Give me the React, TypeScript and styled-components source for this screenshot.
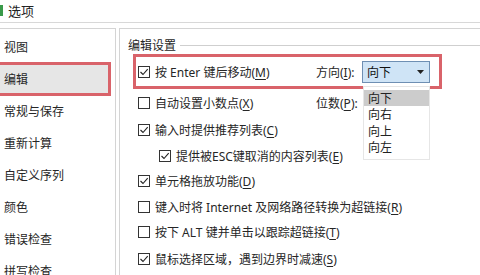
import React from "react";
import styled, { createGlobalStyle } from "styled-components";

const GlobalStyle = createGlobalStyle`
  html, body { margin: 0; padding: 0; background: #ffffff; }
  body {
    width: 480px; height: 275px; overflow: hidden;
    font-family: "Noto Sans", "Noto Sans CJK SC", sans-serif;
    font-size: 12px; color: #262626;
  }
  * { box-sizing: border-box; }
`;

const RED = "#d9636a";

const Window = styled.div`
  width: 480px; height: 275px; display: flex; flex-direction: column; background: #fff; overflow: hidden;
`;

const TitleBar = styled.div`
  height: 23px; display: flex; align-items: center; border-bottom: 1px solid #d8d8d8; flex: none;
`;

const AppMark = styled.div`
  width: 3px; height: 11px; background: #3a9a4a; margin-top: -1px;
`;

const Title = styled.span`
  margin-left: 5px; font-size: 13px; color: #222; margin-top: -2px;
`;

const Body = styled.div`
  flex: 1; display: flex; gap: 3px; padding-top: 5px; min-height: 0;
`;

const Sidebar = styled.div`
  width: 116px; flex: none; border-top: 1px solid #d4d4d4; border-right: 1px solid #d4d4d4;
  padding-top: 2px; display: flex; flex-direction: column;
`;

const NavItem = styled.div<{ $active?: boolean }>`
  height: 32px; flex: none; display: flex; align-items: center;
  padding-left: ${(p) => (p.$active ? "10px" : "4px")};
  margin-left: ${(p) => (p.$active ? "-6px" : "0")};
  margin-right: 5px; color: #262626; font-size: 12px;
  background: ${(p) => (p.$active ? "#e6e6e6" : "transparent")};
  outline: ${(p) => (p.$active ? `3px solid ${RED}` : "none")};
  outline-offset: -2px;
`;

const Content = styled.div`
  flex: 1; border-top: 1px solid #d4d4d4; border-left: 1px solid #d4d4d4;
  display: flex; flex-direction: column;
`;

const GroupHeader = styled.div`
  margin-top: 8px; height: 16px; padding-left: 8px; display: flex; align-items: center;
  color: #262626;
  &::after { content: ""; flex: 1; height: 1px; background: #cfcfcf; margin-left: 4px; }
`;

const HighlightRow = styled.div`
  margin-top: 1px; margin-left: 13px; width: 309px; height: 35px; flex: none;
  border: 3px solid ${RED}; padding: 0 9px 0 2px; display: flex; align-items: center;
`;

const Row = styled.div<{ $h: number; $indent?: number; $w?: number }>`
  height: ${(p) => p.$h}px; flex: none; display: flex; align-items: center;
  margin-left: ${(p) => p.$indent ?? 18}px;
  width: ${(p) => (p.$w ? `${p.$w}px` : "auto")};
`;

const Box = styled.span`
  width: 12px; height: 12px; border: 1px solid #333; background: #fff; flex: none;
  display: inline-flex; align-items: center; justify-content: center; margin-right: 5px;
`;

const Label = styled.span<{ $grow?: boolean }>`
  flex: ${(p) => (p.$grow ? 1 : "none")}; white-space: nowrap; color: #262626;
  u { text-decoration: underline; text-underline-offset: 2px; }
`;

const FieldLabel = styled.span`
  width: 46px; flex: none; white-space: nowrap; color: #262626;
  u { text-decoration: underline; text-underline-offset: 2px; }
`;

const Select = styled.div`
  position: relative; width: 68px; height: 22px; flex: none;
  background: #cfe4f6; border: 1px solid #6e8fb3; display: flex; align-items: center;
  padding: 0 5px 0 4px; justify-content: space-between; color: #111;
`;

const Spacer = styled.div`
  width: 68px; height: 22px; flex: none;
`;

const Menu = styled.div`
  position: absolute; left: 0; top: 24px; width: 67px; background: #fff;
  border: 1px solid #e6e6e6; padding-top: 3px; padding-bottom: 3px; z-index: 2;
`;

const MenuItem = styled.div<{ $active?: boolean }>`
  height: 16.5px; display: flex; align-items: center; padding-left: 4px; color: #222;
  background: ${(p) => (p.$active ? "#cccccc" : "transparent")};
`;

const Check = ({ on }: { on?: boolean }) => (
  <Box>
    {on && (
      <svg width="10" height="10" viewBox="0 0 10 10">
        <polyline points="1.5,5 4,7.5 8.7,2.2" fill="none" stroke="#222" strokeWidth="1.1" />
      </svg>
    )}
  </Box>
);

const nav = ["视图", "编辑", "常规与保存", "重新计算", "自定义序列", "颜色", "错误检查", "拼写检查"];

export default function App() {
  return (
    <>
      <GlobalStyle />
      <Window>
        <TitleBar>
          <AppMark />
          <Title>选项</Title>
        </TitleBar>
        <Body>
          <Sidebar>
            {nav.map((n) => (
              <NavItem key={n} $active={n === "编辑"}>{n}</NavItem>
            ))}
          </Sidebar>
          <Content>
            <GroupHeader>编辑设置</GroupHeader>
            <HighlightRow>
              <Check on />
              <Label $grow>按 Enter 键后移动(<u>M</u>)</Label>
              <FieldLabel>方向(<u>I</u>):</FieldLabel>
              <Select>
                <span>向下</span>
                <svg width="7" height="4" viewBox="0 0 7 4">
                  <polygon points="0,0 7,0 3.5,4" fill="#222" />
                </svg>
                <Menu>
                  <MenuItem $active>向下</MenuItem>
                  <MenuItem>向右</MenuItem>
                  <MenuItem>向上</MenuItem>
                  <MenuItem>向左</MenuItem>
                </Menu>
              </Select>
            </HighlightRow>
            <Row $h={27} $w={292}>
              <Check />
              <Label $grow>自动设置小数点(<u>X</u>)</Label>
              <FieldLabel>位数(<u>P</u>):</FieldLabel>
              <Spacer />
            </Row>
            <Row $h={28}>
              <Check on />
              <Label>输入时提供推荐列表(<u>C</u>)</Label>
            </Row>
            <Row $h={24} $indent={39}>
              <Check on />
              <Label>提供被ESC键取消的内容列表(<u>E</u>)</Label>
            </Row>
            <Row $h={26}>
              <Check on />
              <Label>单元格拖放功能(<u>D</u>)</Label>
            </Row>
            <Row $h={25}>
              <Check />
              <Label>键入时将 Internet 及网络路径转换为超链接(<u>R</u>)</Label>
            </Row>
            <Row $h={26}>
              <Check />
              <Label>按下 ALT 键并单击以跟踪超链接(<u>T</u>)</Label>
            </Row>
            <Row $h={27}>
              <Check on />
              <Label>鼠标选择区域，遇到边界时减速(<u>S</u>)</Label>
            </Row>
          </Content>
        </Body>
      </Window>
    </>
  );
}
